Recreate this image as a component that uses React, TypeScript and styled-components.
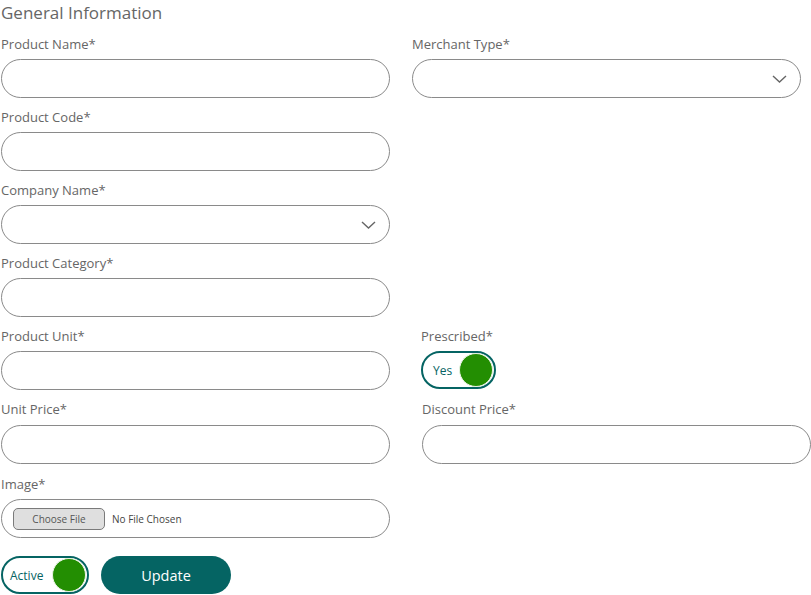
import React from "react";
import styled, { createGlobalStyle } from "styled-components";

const Global = createGlobalStyle`
  html, body { margin: 0; padding: 0; background: #ffffff; }
  body { font-family: "Open Sans", "Noto Sans", sans-serif; }
  * { box-sizing: border-box; }
`;

const TEAL = "#056463";
const GREEN = "#238e02";

const Page = styled.div`
  width: 811px;
  padding: 0 0 0 1px;
  display: flex;
  flex-direction: column;
`;

const Title = styled.h2`
  margin: 0 0 6px 0;
  font-size: 17px;
  line-height: 26px;
  font-weight: 400;
  color: #666;
`;

const Row = styled.div<{ $gap?: number; $mt?: number }>`
  display: flex;
  gap: ${(p) => p.$gap ?? 22}px;
  align-items: flex-start;
  margin-top: ${(p) => p.$mt ?? 0}px;
`;

const Field = styled.div<{ $w?: number; $gap?: number }>`
  width: ${(p) => p.$w ?? 389}px;
  display: flex;
  flex-direction: column;
  gap: ${(p) => p.$gap ?? 4}px;
  margin-bottom: 7px;
`;

const Label = styled.label`
  font-size: 13px;
  line-height: 24px;
  height: 23px;
  color: #666;
`;

const TextInput = styled.input`
  height: 39px;
  width: 100%;
  border: 1px solid #8a8a8a;
  border-radius: 20px;
  padding: 0 16px;
  font: inherit;
  font-size: 13px;
  outline: none;
  background: #fff;
`;

const SelectWrap = styled.div`
  position: relative;
  height: 39px;
  width: 100%;
`;

const Select = styled.select`
  appearance: none;
  -webkit-appearance: none;
  height: 39px;
  width: 100%;
  border: 1px solid #8a8a8a;
  border-radius: 20px;
  padding: 0 36px 0 16px;
  background: #fff;
  font: inherit;
  font-size: 13px;
  outline: none;
`;

const Chevron = styled.svg`
  position: absolute;
  right: 14px;
  top: 16px;
  pointer-events: none;
`;

const FileBox = styled.div`
  height: 39px;
  width: 100%;
  border: 1px solid #8a8a8a;
  border-radius: 20px;
  display: flex;
  align-items: center;
  padding: 0 0 0 11px;
  gap: 7px;
`;

const FileButton = styled.button`
  width: 92px;
  height: 22px;
  border: 1px solid #7a7a7a;
  border-radius: 5px;
  background: #dfdfdf;
  color: #555;
  font-family: inherit;
  font-size: 10px;
  padding: 0;
  cursor: pointer;
`;

const FileText = styled.span`
  font-size: 10px;
  color: #444;
`;

const Toggle = styled.div<{ $w: number }>`
  width: ${(p) => p.$w}px;
  height: 38px;
  border: 2px solid ${TEAL};
  border-radius: 19px;
  display: flex;
  align-items: center;
  justify-content: space-between;
  padding: 0 1px 0 ${(p) => (p.$w > 80 ? 7 : 10)}px;
  background: #fff;
`;

const ToggleText = styled.span`
  font-size: 12px;
  color: ${TEAL};
`;

const Knob = styled.span`
  width: 34px;
  height: 34px;
  border-radius: 50%;
  background: ${GREEN};
  border: 1px solid #e8f3e4;
`;

const ToggleField = styled.div`
  display: flex;
  flex-direction: column;
  gap: 4px;
  margin-bottom: 7px;
`;

const Actions = styled.div`
  display: flex;
  align-items: center;
  gap: 12px;
  margin-top: 11px;
`;

const UpdateButton = styled.button`
  width: 130px;
  height: 38px;
  border: none;
  border-radius: 19px;
  background: ${TEAL};
  color: #fff;
  font-family: inherit;
  font-size: 14.5px;
  cursor: pointer;
`;

const ChevronIcon = () => (
  <Chevron width="15" height="8" viewBox="0 0 15 8">
    <path d="M1 1 L7.5 7 L14 1" fill="none" stroke="#666" strokeWidth="1.4" />
  </Chevron>
);

const InputField = ({ label, gap }: { label: string; gap?: number }) => (
  <Field $gap={gap}>
    <Label>{label}</Label>
    <TextInput />
  </Field>
);

const SelectField = ({ label }: { label: string }) => (
  <Field>
    <Label>{label}</Label>
    <SelectWrap>
      <Select defaultValue="">
        <option value=""></option>
      </Select>
      <ChevronIcon />
    </SelectWrap>
  </Field>
);

export default function App() {
  return (
    <>
      <Global />
      <Page>
        <Title>General Information</Title>
        <Row>
          <InputField label="Product Name*" />
          <SelectField label="Merchant Type*" />
        </Row>
        <Row>
          <InputField label="Product Code*" />
        </Row>
        <Row>
          <SelectField label="Company Name*" />
        </Row>
        <Row>
          <InputField label="Product Category*" />
        </Row>
        <Row $gap={31}>
          <InputField label="Product Unit*" />
          <ToggleField>
            <Label>Prescribed*</Label>
            <Toggle $w={75}>
              <ToggleText>Yes</ToggleText>
              <Knob />
            </Toggle>
          </ToggleField>
        </Row>
        <Row $gap={32}>
          <InputField label="Unit Price*" gap={5} />
          <InputField label="Discount Price*" gap={5} />
        </Row>
        <Row $mt={1}>
          <Field>
            <Label>Image*</Label>
            <FileBox>
              <FileButton type="button">Choose File</FileButton>
              <FileText>No File Chosen</FileText>
            </FileBox>
          </Field>
        </Row>
        <Actions>
          <Toggle $w={88}>
            <ToggleText>Active</ToggleText>
            <Knob />
          </Toggle>
          <UpdateButton type="button">Update</UpdateButton>
        </Actions>
      </Page>
    </>
  );
}
